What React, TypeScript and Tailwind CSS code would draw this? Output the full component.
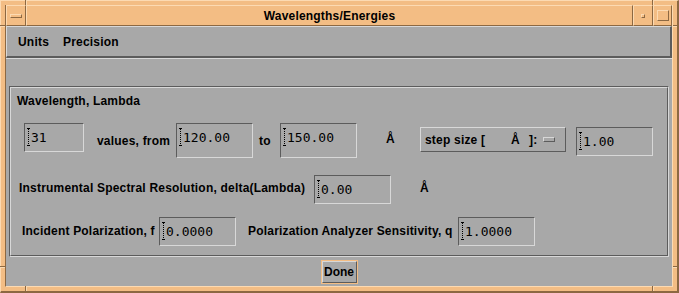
import React from 'react';

const raised = 'border border-t-[#d8d8d8] border-l-[#d8d8d8] border-b-[#5c5c5c] border-r-[#5c5c5c]';
const sunken = 'border border-t-[#5c5c5c] border-l-[#5c5c5c] border-b-[#d8d8d8] border-r-[#d8d8d8]';
const raisedOrange = 'border border-t-[#fcdab2] border-l-[#fcdab2] border-b-[#8c6842] border-r-[#8c6842]';

const Field: React.FC<{ value: string; className: string }> = ({ value, className }) => (
  <div className={`${sunken} ${className} shrink-0 flex items-start pl-[1px]`}>
    <svg width="5" height="18" className="mt-[4px] shrink-0">
      <line x1="1" y1="0.5" x2="4" y2="0.5" stroke="#000" />
      <line x1="2.5" y1="1" x2="2.5" y2="17" stroke="#000" strokeDasharray="1 1" />
      <line x1="1" y1="17.5" x2="4" y2="17.5" stroke="#000" />
    </svg>
    <span className="mt-[6px] text-[13px] leading-[16px] font-['DejaVu_Sans_Mono',monospace] text-black whitespace-pre">
      {value}
    </span>
  </div>
);

const Label: React.FC<{ children: React.ReactNode; className: string }> = ({ children, className }) => (
  <div className={`shrink-0 text-[12px] leading-[14px] font-bold tracking-[0.2px] whitespace-nowrap ${className}`}>
    {children}
  </div>
);

const Mark: React.FC<{ className: string }> = ({ className }) => <div className={`absolute ${className}`} />;

export default function App() {
  return (
    <div className="relative w-[679px] h-[293px] bg-[#f3bd84] border-t border-l border-t-[#fcdab2] border-l-[#fcdab2] border-b-2 border-r-2 border-b-[#8c6842] border-r-[#8c6842] p-[4px] font-['Liberation_Sans',Arial,sans-serif] text-black">
      {/* frame resize marks */}
      <Mark className="left-[24px] top-[-1px] w-[1px] h-[5px] bg-[#8c6842]" />
      <Mark className="left-[25px] top-[-1px] w-[1px] h-[5px] bg-[#fcdab2]" />
      <Mark className="left-[651px] top-[-1px] w-[1px] h-[5px] bg-[#8c6842]" />
      <Mark className="left-[652px] top-[-1px] w-[1px] h-[5px] bg-[#fcdab2]" />
      <Mark className="left-[24px] top-[285px] w-[1px] h-[5px] bg-[#8c6842]" />
      <Mark className="left-[25px] top-[285px] w-[1px] h-[5px] bg-[#fcdab2]" />
      <Mark className="left-[651px] top-[285px] w-[1px] h-[5px] bg-[#8c6842]" />
      <Mark className="left-[652px] top-[285px] w-[1px] h-[5px] bg-[#fcdab2]" />
      <Mark className="left-[-1px] top-[24px] w-[5px] h-[1px] bg-[#8c6842]" />
      <Mark className="left-[-1px] top-[25px] w-[5px] h-[1px] bg-[#fcdab2]" />
      <Mark className="left-[672px] top-[24px] w-[4px] h-[1px] bg-[#8c6842]" />
      <Mark className="left-[672px] top-[25px] w-[4px] h-[1px] bg-[#fcdab2]" />
      <Mark className="left-[-1px] top-[265px] w-[5px] h-[1px] bg-[#8c6842]" />
      <Mark className="left-[-1px] top-[266px] w-[5px] h-[1px] bg-[#fcdab2]" />
      <Mark className="left-[672px] top-[265px] w-[4px] h-[1px] bg-[#8c6842]" />
      <Mark className="left-[672px] top-[266px] w-[4px] h-[1px] bg-[#fcdab2]" />

      <div className="flex flex-col h-full border-l border-r border-b border-l-[#8c6842] border-r-[#fcdab2] border-b-[#fcdab2]">
        {/* title bar */}
        <div className="flex h-[21px] shrink-0">
          <div className={`${raisedOrange} w-[20px] flex items-center justify-center`}>
            <div className={`${raisedOrange} w-[12px] h-[4px]`} />
          </div>
          <div className={`${raisedOrange} flex-1 flex items-center justify-center text-[12px] leading-[14px] font-bold tracking-[0.2px]`}>
            Wavelengths/Energies
          </div>
          <div className={`${raisedOrange} w-[20px] flex items-center justify-center`}>
            <div className={`${raisedOrange} w-[4px] h-[4px]`} />
          </div>
          <div className={`${raisedOrange} w-[19px] flex items-center justify-center`}>
            <div className={`${raisedOrange} w-[12px] h-[11px]`} />
          </div>
        </div>

        {/* menu bar */}
        <div className="h-[32px] shrink-0 bg-[#a8a8a8] border-t border-l border-t-[#d8d8d8] border-l-[#d8d8d8] border-b-2 border-r-2 border-b-[#5c5c5c] border-r-[#5c5c5c] flex items-center text-[12px] leading-[14px] font-bold tracking-[0.2px]">
          <span className="ml-[11px]">Units</span>
          <span className="ml-[14px]">Precision</span>
        </div>

        {/* form */}
        <div className="flex-1 bg-[#a8a8a8] border-t border-t-[#d8d8d8] flex flex-col">
          <div className="mx-[3px] mt-[27px] h-[171px] border border-t-[#5c5c5c] border-l-[#5c5c5c] border-b-[#d8d8d8] border-r-[#d8d8d8]">
            <div className="h-full border border-t-[#d8d8d8] border-l-[#d8d8d8] border-b-[#5c5c5c] border-r-[#5c5c5c] flex flex-col">
              <Label className="ml-[6px] mt-[6px]">Wavelength, Lambda</Label>

              <div className="flex items-start mt-[15px]">
                <Field value="31" className="ml-[13px] w-[60px] h-[29px]" />
                <Label className="ml-[13px] w-[79px] mt-[11px]">values, from</Label>
                <Field value="120.00" className="w-[77px] h-[35px]" />
                <Label className="ml-[6px] w-[21px] mt-[11px]">to</Label>
                <Field value="150.00" className="w-[77px] h-[35px]" />
                <Label className="ml-[29px] w-[34px] mt-[9px]">Å</Label>
                <div className={`${raised} shrink-0 mt-[4px] w-[146px] h-[25px] flex items-center pl-[4px] text-[12px] leading-[14px] font-bold tracking-[0.2px]`}>
                  <span className="w-[86px] shrink-0">step size [</span>
                  <span className="w-[18px] shrink-0">Å</span>
                  <span className="shrink-0">]:</span>
                  <div className={`${raised} ml-[6px] w-[12px] h-[5px]`} />
                </div>
                <Field value="1.00" className="ml-[10px] mt-[4px] w-[77px] h-[29px]" />
              </div>

              <div className="flex items-start mt-[17px]">
                <Label className="ml-[8px] w-[295px] mt-[6px]">Instrumental Spectral Resolution, delta(Lambda)</Label>
                <Field value="0.00" className="w-[77px] h-[29px]" />
                <Label className="ml-[29px] mt-[6px]">Å</Label>
              </div>

              <div className="flex items-start mt-[13px]">
                <Label className="ml-[11px] w-[137px] mt-[7px]">Incident Polarization, f</Label>
                <Field value="0.0000" className="w-[77px] h-[29px]" />
                <Label className="ml-[12px] w-[210px] mt-[7px]">Polarization Analyzer Sensitivity, q</Label>
                <Field value="1.0000" className="w-[77px] h-[29px]" />
              </div>
            </div>
          </div>

          <div className="self-center mt-[3px] w-[37px] h-[24px] border border-[#f3bd84]">
            <div className={`${raised} h-full flex items-center justify-center text-[12px] leading-[14px] font-bold`}>
              Done
            </div>
          </div>
        </div>
      </div>
    </div>
  );
}
